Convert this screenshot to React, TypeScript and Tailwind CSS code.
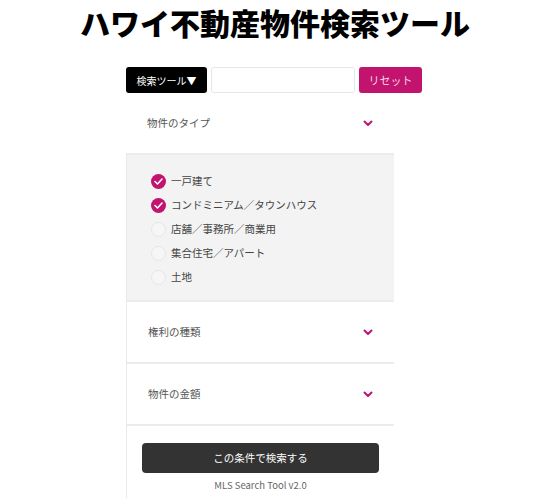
import React, { useState } from 'react'

const types = [
    { label: '一戸建て', checked: true },
    { label: 'コンドミニアム／タウンハウス', checked: true },
    { label: '店舗／事務所／商業用', checked: false },
    { label: '集合住宅／アパート', checked: false },
    { label: '土地', checked: false },
]

function Chevron() {
    return (
        <svg width="10" height="7" viewBox="0 0 10 7" fill="none">
            <path d="M1.5 1.5 L5 5 L8.5 1.5" stroke="#c2136f" strokeWidth="2" strokeLinecap="round" strokeLinejoin="round" />
        </svg>
    )
}

function SectionHeader({ title }: { title: string }) {
    return (
        <div className="flex h-[62px] items-center justify-between border-b-2 border-[#ececec] pl-[21px] pr-[21px]">
            <span className="text-[10.5px] text-[#555]">{title}</span>
            <Chevron />
        </div>
    )
}

export default function App() {
    const [checked, setChecked] = useState(types.map((t) => t.checked))

    return (
        <div className="min-h-screen bg-white" style={{ fontFamily: '"Noto Sans CJK JP", "Noto Sans", sans-serif' }}>
            <h1 className="text-center text-[30px] font-black leading-[44px] text-black">ハワイ不動産物件検索ツール</h1>

            <div className="mx-auto mt-[23px] w-[296px] -translate-x-px">
                <div className="flex h-[26px] gap-1">
                    <button className="w-[81px] rounded-[3px] bg-black text-[10px] text-white">検索ツール▼</button>
                    <input className="w-[144px] rounded-[3px] border border-[#e6e6e6] bg-white px-2 text-[11px] outline-none" />
                    <button className="w-[63px] rounded-[3px] bg-[#c2136f] text-[11px] text-[#f5d5e5]">リセット</button>
                </div>

                <div className="w-[268px]">
                    <SectionHeader title="物件のタイプ" />
                    <div className="border-l border-[#e9e9e9]">
                        <div className="border-b-2 border-[#ececec] bg-[#f3f3f3] pb-[11px] pl-[24px] pt-[14px]">
                            {types.map((t, i) => (
                                <label key={t.label} className="flex h-[24px] cursor-pointer items-center gap-[5px]">
                                    <span
                                        onClick={() => setChecked((c) => c.map((v, j) => (j === i ? !v : v)))}
                                        className={`flex h-[15px] w-[15px] items-center justify-center rounded-full ${
                                            checked[i] ? 'bg-[#c2136f]' : 'border border-[#e6e6e6] bg-[#f6f6f6]'
                                        }`}
                                    >
                                        {checked[i] && (
                                            <svg width="9" height="7" viewBox="0 0 9 7" fill="none">
                                                <path d="M1 3.5 L3.5 6 L8 1" stroke="white" strokeWidth="1.6" strokeLinecap="round" strokeLinejoin="round" />
                                            </svg>
                                        )}
                                    </span>
                                    <span className="text-[10.5px] text-[#444]">{t.label}</span>
                                </label>
                            ))}
                        </div>
                        <SectionHeader title="権利の種類" />
                        <SectionHeader title="物件の金額" />

                        <div className="px-[15px] pb-3 pt-[17px]">
                            <button className="h-[30px] w-full rounded-[4px] bg-[#333333] text-[10.5px] text-white">この条件で検索する</button>
                            <p className="mt-[5px] text-center text-[9.5px] text-[#666]">MLS Search Tool v2.0</p>
                        </div>
                    </div>
                </div>
            </div>
        </div>
    )
}
